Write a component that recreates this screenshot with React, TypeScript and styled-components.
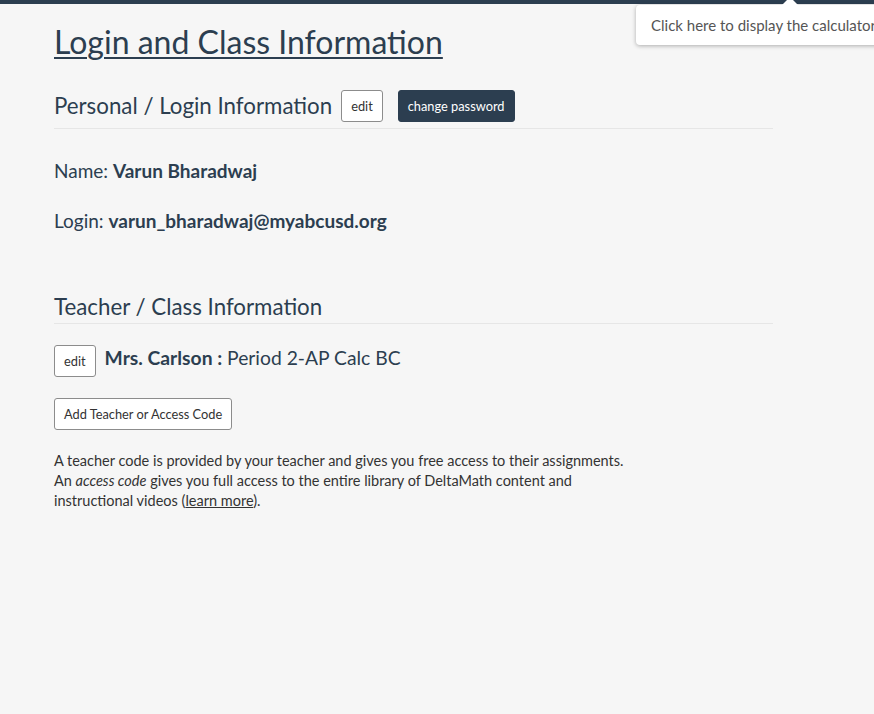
import React from "react";
import styled, { createGlobalStyle } from "styled-components";

const Global = createGlobalStyle`
  html, body {
    margin: 0;
    padding: 0;
    overflow: hidden;
    background: #f6f6f6;
    font-family: Lato, "Open Sans", sans-serif;
    color: #2c3e50;
  }
  * { box-sizing: border-box; }
`;

const Page = styled.div`
  position: relative;
  min-height: 714px;
  width: 874px;
  overflow: hidden;
`;

const TopBar = styled.div`
  height: 4px;
  background: #2c3e50;
`;

const Content = styled.main`
  width: 773px;
  padding: 0 0 0 54px;
`;

const Title = styled.h1`
  margin: 18px 0 0;
  font-size: 32px;
  font-weight: 400;
  line-height: 40px;
  text-decoration: underline;
  text-underline-offset: 3px;
  text-decoration-thickness: 2px;
`;

const SectionHeader = styled.div<{ $top: number; $pb: number }>`
  display: flex;
  align-items: center;
  gap: 9px;
  margin-top: ${(p) => p.$top}px;
  padding-bottom: ${(p) => p.$pb}px;
  border-bottom: 1px solid #e6e6e6;
`;

const SectionTitle = styled.h2`
  margin: 0;
  font-size: 22.3px;
  font-weight: 400;
  line-height: 28px;
`;

const Button = styled.button<{ $dark?: boolean; $ml?: number }>`
  font-family: Lato, sans-serif;
  font-size: 12.8px;
  height: 32px;
  padding: 0 9px;
  border-radius: 3px;
  margin-left: ${(p) => p.$ml ?? 0}px;
  border: 1px solid ${(p) => (p.$dark ? "#2c3e50" : "#8c8c8c")};
  background: ${(p) => (p.$dark ? "#2c3e50" : "#fff")};
  color: ${(p) => (p.$dark ? "#fff" : "#333")};
  cursor: pointer;
`;

const InfoLine = styled.p<{ $top: number }>`
  margin: ${(p) => p.$top}px 0 0;
  font-size: 19px;
  line-height: 24px;
  color: #2c3e50;
  b { font-weight: 700; }
`;

const ClassRow = styled.div`
  display: flex;
  align-items: flex-start;
  gap: 9px;
  margin-top: 21px;
  font-size: 19.3px;
  line-height: 26px;
  b { font-weight: 700; }
`;

const AddWrap = styled.div`
  margin-top: 21px;
`;

const Note = styled.p`
  margin: 21px 0 0;
  width: 585px;
  font-size: 14.5px;
  line-height: 20px;
  color: #333;
  a { color: #333; text-decoration: underline; }
`;

const Tooltip = styled.div`
  position: absolute;
  left: 636px;
  top: 5px;
  width: 260px;
  height: 40px;
  background: #fff;
  border-radius: 4px;
  box-shadow: 0 1px 4px rgba(0,0,0,0.3);
  padding: 0 0 0 15px;
  display: flex;
  align-items: center;
  font-size: 15px;
  color: #555;
  white-space: nowrap;
  &::before {
    content: "";
    position: absolute;
    top: -8px;
    left: 146px;
    border: 8px solid transparent;
    border-top: 0;
    border-bottom-color: #fff;
  }
`;

export default function App() {
  return (
    <Page>
      <Global />
      <TopBar />
      <Content>
        <Title>Login and Class Information</Title>
        <SectionHeader $top={28} $pb={6}>
          <SectionTitle>Personal / Login Information</SectionTitle>
          <Button>edit</Button>
          <Button $dark $ml={6}>change password</Button>
        </SectionHeader>
        <InfoLine $top={30}>Name: <b>Varun Bharadwaj</b></InfoLine>
        <InfoLine $top={26}>Login: <b>varun_bharadwaj@myabcusd.org</b></InfoLine>
        <SectionHeader $top={60} $pb={2}>
          <SectionTitle>Teacher / Class Information</SectionTitle>
        </SectionHeader>
        <ClassRow>
          <Button>edit</Button>
          <span><b>Mrs. Carlson :</b> Period 2-AP Calc BC</span>
        </ClassRow>
        <AddWrap>
          <Button>Add Teacher or Access Code</Button>
        </AddWrap>
        <Note>
          A teacher code is provided by your teacher and gives you free access to their assignments.
          An <i>access code</i> gives you full access to the entire library of DeltaMath content and
          instructional videos (<a href="#">learn more</a>).
        </Note>
      </Content>
      <Tooltip>Click here to display the calculator</Tooltip>
    </Page>
  );
}
